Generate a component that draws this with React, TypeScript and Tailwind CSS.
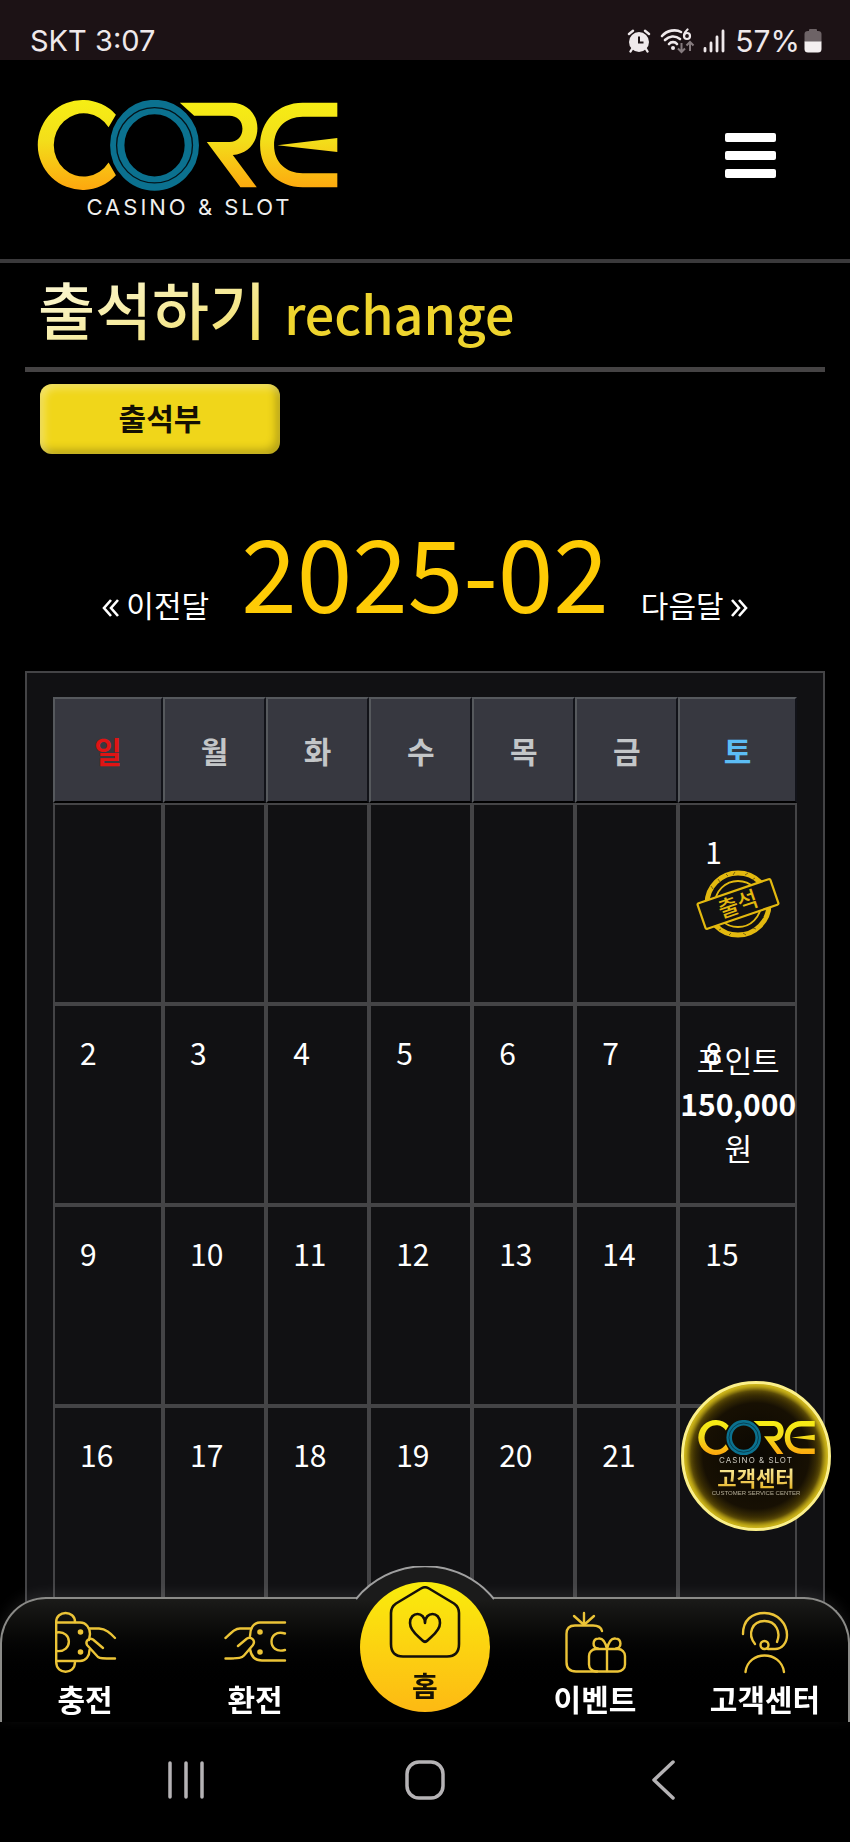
import React from "react";

const KR = "font-['Noto_Sans_CJK_KR',sans-serif]";

function CoreMark({ id, className }: { id: string; className?: string }) {
  return (
    <svg viewBox="112 301 904 272" className={className} aria-hidden="true">
      <defs>
        <linearGradient id={id} gradientUnits="userSpaceOnUse" x1="0" y1="301" x2="0" y2="573">
          <stop offset="0" stopColor="#f6ee14" />
          <stop offset="0.45" stopColor="#f3de1a" />
          <stop offset="1" stopColor="#fda60e" />
        </linearGradient>
      </defs>
      <g fill={`url(#${id})`}>
        <path d="M349 345 A135 135 0 1 0 349 527 L327 489 A90 95 0 1 1 327 383 Z" />
        <path d="M541 309 H696 C742 309 774 342 774 386 C774 430 744 463 700 466 L772 563 H723 L622 427 H690 C714 427 729 410 729 387 C729 363 712 348 690 348 H584 Z" />
        <path d="M1014 309 H910 C835 309 782 365 782 437 C782 509 835 563 910 563 H1014 V521 H910 C860 521 824 488 824 437 C824 385 860 351 910 351 H1014 Z" />
        <path d="M834 437 L1014 415 V457 Z" />
      </g>
      <ellipse cx="465" cy="437" rx="112" ry="115" fill="none" stroke="#0b718f" strokeWidth="43" />
      <ellipse cx="465" cy="437" rx="114" ry="113" fill="none" stroke="#04141b" strokeWidth="4" />
    </svg>
  );
}

function StatusBar() {
  return (
    <div className="flex h-15 items-end justify-between bg-[#1c1215] pr-7 pl-[30px] pb-px font-['Inter',sans-serif] text-[30px] leading-9 text-[#efe9eb]">
      <span className="text-[29px]">SKT 3:07</span>
      <div className="flex items-center gap-2">
        <svg viewBox="0 0 24 24" className="size-6" aria-hidden="true">
          <circle cx="12" cy="13" r="10" fill="#efe9eb" />
          <g stroke="#efe9eb" strokeWidth="2.4" strokeLinecap="round">
            <path d="M2 5 L6 1.8 M22 5 L18 1.8 M5 20 L3.5 22.5 M19 20 L20.5 22.5" />
          </g>
          <path d="M12 7.5 V13.5 H16.5" fill="none" stroke="#1c1215" strokeWidth="2" />
        </svg>
        <svg viewBox="0 0 36 26" className="h-[26px] w-9" aria-hidden="true">
          <g fill="none" stroke="#efe9eb" strokeWidth="2.6" strokeLinecap="round">
            <path d="M3 8 C8 2 17 1 22 4" />
            <path d="M6 12 C10 8 16 7 21 11" />
            <path d="M10 16 C12 13.5 16 13.5 18 16" />
          </g>
          <g fill="none" stroke="#efe9eb" strokeWidth="2.2" strokeLinecap="round">
            <path d="M28.500 1.500 Q25.500 4 25 7.500" />
            <circle cx="28" cy="8" r="3" />
          </g>
          <circle cx="14" cy="20" r="2" fill="#efe9eb" />
          <g fill="none" stroke="#857b7e" strokeWidth="2">
            <path d="M22.5 15 V24 M19 20.5 L22.5 24 L26 20.5" />
            <path d="M31 23 V14 M27.5 17.5 L31 14 L34.5 17.5" />
          </g>
        </svg>
        <svg viewBox="0 0 22 24" className="h-6 w-[22px]" aria-hidden="true">
          <g stroke="#efe9eb" strokeWidth="2.8" strokeLinecap="round">
            <path d="M2 19.5 V22 M8 14 V22 M14 8 V22 M20 2 V22" />
          </g>
        </svg>
        <div className="flex items-center gap-1">
          <span className="ml-0.5">57%</span>
          <svg viewBox="0 0 18 24" className="h-6 w-[18px]" aria-hidden="true">
            <path d="M5 1 Q5 0 6 0 H12 Q13 0 13 1 V2 H14 Q17.5 2 17.5 5 V13 H0.5 V5 Q0.5 2 4 2 H5 Z" fill="#6d6366" />
            <path d="M0.5 12.5 H17.5 V20 Q17.5 23.5 14 23.5 H4 Q0.5 23.5 0.5 20 Z" fill="#f4eff0" />
          </svg>
        </div>
      </div>
    </div>
  );
}

function Header() {
  return (
    <header className="flex h-[203px] items-start justify-between border-b-4 border-[#3a393b] pt-10 pr-[74px] pl-[37px]">
      <a href="#home" className="flex flex-col items-center text-[#efefef]">
        <CoreMark id="mark-header" className="w-[301px]" />
        <span className="mt-1 ml-1 font-['Inter',sans-serif] text-[22px] leading-6 tracking-[3px]">CASINO &amp; SLOT</span>
      </a>
      <button type="button" aria-label="메뉴" className="mt-[33px] flex w-[51px] flex-col gap-[9px]">
        <span className="h-[9px] w-full rounded-xs bg-white" />
        <span className="h-[9px] w-full rounded-xs bg-white" />
        <span className="h-[9px] w-full rounded-xs bg-white" />
      </button>
    </header>
  );
}

function Stamp() {
  return (
    <svg viewBox="0 0 86 70" className="mx-auto h-[70px] w-[86px]" role="img" aria-label="출석">
      <g fill="none" stroke="#e3b90f">
        <circle cx="43" cy="35" r="31" strokeWidth="5" />
        <circle cx="43" cy="35" r="23" strokeWidth="1.8" />
      </g>
      <g stroke="#4a3d0c" strokeWidth="0.7">
        <path d="M23 10 L25 13 M31 5 L33 7 M40 3 L38 6 M53 4 L50 6 M60 9 L57 11 M16 17 L18 20 M67 50 L69 48 M58 59 L61 60 M48 64 L51 66 M36 64 L34 66 M26 60 L24 61" />
      </g>
      <g transform="rotate(-19 43 35)">
        <rect x="4.5" y="21.5" width="77" height="27" rx="1.5" fill="#111113" stroke="#e3b90f" strokeWidth="2.2" />
        <text x="43" y="43" textAnchor="middle" fill="#e3b90f" fontSize="22" className={`${KR} font-medium`}>출석</text>
      </g>
    </svg>
  );
}

function Bonus() {
  return (
    <p className="pb-1 text-center">
      포인트
      <br />
      <b>150,000</b>
      <br />
      원
    </p>
  );
}

const DAYS = [
  { name: "일", color: "text-[#df1414]" },
  { name: "월", color: "text-[#c3c6c8]" },
  { name: "화", color: "text-[#c3c6c8]" },
  { name: "수", color: "text-[#c3c6c8]" },
  { name: "목", color: "text-[#c3c6c8]" },
  { name: "금", color: "text-[#c3c6c8]" },
  { name: "토", color: "text-[#5cbdf5]" },
];

const FIRST_WEEKDAY = 6;
const WEEKS = 4;

function Calendar() {
  return (
    <section className="mx-[25px] border-2 border-[#444446] bg-[#111113] px-[26px] py-6">
      <table className="w-full table-fixed border-separate border-spacing-0">
        <colgroup>
          <col className="w-[14.8%]" />
          <col className="w-[13.85%]" />
          <col className="w-[13.85%]" />
          <col className="w-[13.85%]" />
          <col className="w-[13.85%]" />
          <col className="w-[13.85%]" />
          <col />
        </colgroup>
        <thead>
          <tr>
            {DAYS.map((d) => (
              <th
                key={d.name}
                scope="col"
                className={`h-[106px] border-2 border-t-[#56595d] border-r-[#121319] border-b-black border-l-[#56595d] bg-[#373840] text-[30px] leading-[44px] font-bold ${d.color}`}
              >
                {d.name}
              </th>
            ))}
          </tr>
        </thead>
        <tbody>
          {Array.from({ length: WEEKS }, (_, week) => (
            <tr key={week}>
              {DAYS.map((d, i) => {
                const day = week * 7 + i - FIRST_WEEKDAY + 1;
                return (
                  <td key={d.name} className="h-[201px] border-2 border-[#444446] p-0 text-[30px] leading-[44px] text-white">
                    <div className="grid h-[197px]">
                      <span className="col-start-1 row-start-1 pt-6 pl-[25px]">{day > 0 ? day : ""}</span>
                      <div className="col-start-1 row-start-1 self-center">
                        {day === 1 && <Stamp />}
                        {day === 8 && <Bonus />}
                      </div>
                    </div>
                  </td>
                );
              })}
            </tr>
          ))}
        </tbody>
      </table>
    </section>
  );
}

function SupportBadge() {
  return (
    <a
      href="#support"
      className="fixed right-[19px] bottom-[311px] flex size-[150px] flex-col items-center rounded-full border-3 border-[#fbf08a] bg-[radial-gradient(circle,#0a0702_0%,#171003_52%,#4a3b04_64%,#b9a011_70%)] pt-9 shadow-[inset_0_0_8px_2px_#d6bf1e]"
    >
      <CoreMark id="mark-badge" className="w-[117px]" />
      <span className="font-['Inter',sans-serif] text-[8px] leading-[10px] tracking-[1px] text-[#c9c6bd]">CASINO &amp; SLOT</span>
      <span className="bg-linear-to-b from-[#fdf4a5] to-[#e5b51d] bg-clip-text text-[21px] leading-6 font-bold text-transparent">고객센터</span>
      <span className="font-['Liberation_Sans',sans-serif] text-[6px] leading-2 whitespace-nowrap text-[#b5ae98]">CUSTOMER SERVICE CENTER</span>
    </a>
  );
}

function DepositIcon() {
  return (
    <g>
      <path d="M1.2 10 V50 C1.2 63 20 63 20 50 M1.2 10 C1.2 -2 20 -2 20 10" />
      <path d="M1.2 10.5 H25 C32 10.5 35 17 35 22 L34 28 M1.2 49 H25 C31 49 34.5 44 34.5 38" />
      <path d="M1.5 20.5 C18 18 18 41 1.5 39" />
      <path d="M34 16.5 H44 C52 17 56 22 60 26 M48 36 L38 27.5 C34 25 30 29 32 33 L43 45 C45 46.5 47 46.5 60 46.5" />
      <circle cx="25.5" cy="20" r="1.6" fill="#ecc437" />
      <circle cx="25.5" cy="40" r="1.6" fill="#ecc437" />
    </g>
  );
}

function WithdrawIcon() {
  return (
    <g>
      <path d="M60 10.5 H35 C28 10.5 25 17 25 24 M60 48.5 H37 C29 48.5 26 44 25 37" />
      <path d="M60 21.5 C42 16 42 43 60 38" />
      <path d="M26 16.5 H15 C10 16.5 7 20 0.5 26 M13 34 L22 26.5 C26 24.5 31 28 28 33 L19 43.5 C17 46 15 46.5 0.5 46.5" />
      <circle cx="35" cy="20" r="1.6" fill="#ecc437" />
      <circle cx="35" cy="40" r="1.6" fill="#ecc437" />
    </g>
  );
}

function EventIcon() {
  return (
    <g>
      <path d="M37 19 C36 15 33 13.5 28 13.5 H10 C4 13.5 1.5 17 1.5 22 V50 C1.5 56 5 59.5 11 59.5 H32" />
      <path d="M19 1 V12 M9 4 L18 12 M29 4 L20 12" />
      <rect x="24" y="37" width="36" height="22.5" rx="7" />
      <path d="M42 37 V59 M42 37 C40 28 37 26 33.5 26.5 C27 27 27 36 33 36.5 M42 37 C44 28 47 26 50.5 26.5 C57 27 57 36 51 36.5" />
    </g>
  );
}

function AgentIcon() {
  return (
    <g>
      <path d="M8 22 C8 8 17 1 29.5 1 C43 1 52 12 52 23 C52 31 47 37 40 37 H33" />
      <path d="M20 32 C12 22 17 9 29.5 9 C41 9 46 20 42 30" />
      <circle cx="29.5" cy="33" r="4" />
      <path d="M10.5 60 C13 38 46 38 49 60" />
    </g>
  );
}

function NavItem({ label, href, children }: { label: string; href: string; children: React.ReactNode }) {
  return (
    <a href={href} className="flex flex-1 flex-col items-center pt-[13px] text-[30px] leading-10 font-bold whitespace-nowrap text-white">
      <svg viewBox="0 0 61 61" className="mb-[5px] size-[61px] overflow-visible" fill="none" stroke="#ecc437" strokeWidth="2.4" strokeLinecap="round" strokeLinejoin="round" aria-hidden="true">
        {children}
      </svg>
      {label}
    </a>
  );
}

function BottomNav() {
  return (
    <div className="fixed inset-x-0 bottom-0 bg-linear-to-t from-black from-85% to-transparent to-85%">
      <nav className="relative h-[125px] rounded-t-[46px] border-2 border-b-0 border-[#8b8b88] bg-linear-to-b from-[#1b1b19] to-black to-75% shadow-[0_-4px_14px_rgba(255,255,255,0.08)]">
        <svg viewBox="0 0 138 34" className="absolute -top-[33px] left-1/2 h-[34px] w-[138px] -translate-x-1/2" aria-hidden="true">
          <path d="M0 33 A89 89 0 0 1 138 33 V34 H0 Z" fill="#1b1b1b" />
          <path d="M0 33 A89 89 0 0 1 138 33" fill="none" stroke="#a0a0a0" strokeWidth="2" />
        </svg>
        <div className="-mx-0.5 flex">
          <NavItem label="충전" href="#deposit"><DepositIcon /></NavItem>
          <NavItem label="환전" href="#withdraw"><WithdrawIcon /></NavItem>
          <div className="flex flex-1 justify-center">
            <a
              href="#home"
              className="relative z-10 -mt-[17px] flex size-[130px] flex-col items-center rounded-full bg-linear-to-b from-[#f9ec0c] to-[#fdb913] pt-1 text-[28px] leading-10 font-bold text-[#171204]"
            >
              <svg viewBox="0 0 72 72" className="mb-[7px] size-[72px] shrink-0" fill="none" stroke="#14100a" strokeWidth="2.6" strokeLinejoin="round" aria-hidden="true">
                <path d="M32 2.500 Q36 0 40 2.5 L65 17.5 Q70 21 70 27 V58 Q70 70.5 58 70.5 H14 Q2 70.5 2 58 V27 Q2 21 7 17.5 Z" />
                <path d="M36 37 C36 25 21 25 21 37 C21 46 31 51 33.5 54.5 Q36 57 38.5 54.5 C41 51 51 46 51 37 C51 25 36 25 36 37 Z" />
              </svg>
              홈
            </a>
          </div>
          <NavItem label="이벤트" href="#event"><EventIcon /></NavItem>
          <NavItem label="고객센터" href="#support"><AgentIcon /></NavItem>
        </div>
      </nav>
      <div className="flex h-[120px] items-start justify-between bg-black px-[166px] pt-[38px] text-[#b5b3b5]">
        <button type="button" aria-label="최근 앱">
          <svg viewBox="0 0 40 40" className="size-10" stroke="currentColor" strokeWidth="3.5" strokeLinecap="round">
            <path d="M4 3 V37 M20 3 V37 M36 3 V37" />
          </svg>
        </button>
        <button type="button" aria-label="홈 화면">
          <svg viewBox="0 0 40 40" className="size-10" fill="none" stroke="currentColor" strokeWidth="3.5">
            <rect x="2" y="2" width="36" height="36" rx="12" />
          </svg>
        </button>
        <button type="button" aria-label="뒤로">
          <svg viewBox="0 0 40 40" className="size-10" fill="none" stroke="currentColor" strokeWidth="3.5" strokeLinecap="round" strokeLinejoin="round">
            <path d="M29 2 L10 20 L29 38" />
          </svg>
        </button>
      </div>
    </div>
  );
}

function Chevrons({ flip }: { flip?: boolean }) {
  return (
    <svg viewBox="0 0 18 18" className={`size-[18px] ${flip ? "rotate-180" : ""}`} fill="none" stroke="currentColor" strokeWidth="2.6" aria-hidden="true">
      <path d="M9 1 L2 9 L9 17 M16 1 L9 9 L16 17" />
    </svg>
  );
}

export default function App() {
  return (
    <div className={`min-h-screen bg-black pb-[200px] text-white ${KR}`}>
      <StatusBar />
      <Header />
      <main>
        <h1 className="mx-[25px] flex h-[109px] items-baseline gap-[18px] border-b-5 border-[#454344] pl-[13px] leading-[90px] font-medium">
          <span className="bg-linear-to-br from-[#faf5cb] from-20% to-[#f2dc51] bg-clip-text text-[62px] text-transparent">출석하기</span>
          <span className="text-[52px] text-[#eed42e]">rechange</span>
        </h1>
        <button
          type="button"
          className="mt-3 ml-10 block h-[70px] w-60 rounded-xl bg-[#f0d61a] pb-1 text-[30px] leading-[44px] font-bold text-[#141003] shadow-[inset_4px_4px_8px_rgba(255,255,255,0.35),inset_-4px_-4px_8px_rgba(0,0,0,0.25)]"
        >
          출석부
        </button>
        <div className="flex items-end justify-center gap-8 pt-[43px] pb-[29px] text-[30px] leading-[44px]">
          <a href="#prev" className="flex items-baseline gap-1.5 pb-4">
            <Chevrons />
            이전달
          </a>
          <h2 className="text-[100px] leading-[145px] text-[#fecb05]">2025-02</h2>
          <a href="#next" className="flex items-baseline gap-1.5 pb-4">
            다음달
            <Chevrons flip />
          </a>
        </div>
        <Calendar />
      </main>
      <SupportBadge />
      <BottomNav />
    </div>
  );
}
